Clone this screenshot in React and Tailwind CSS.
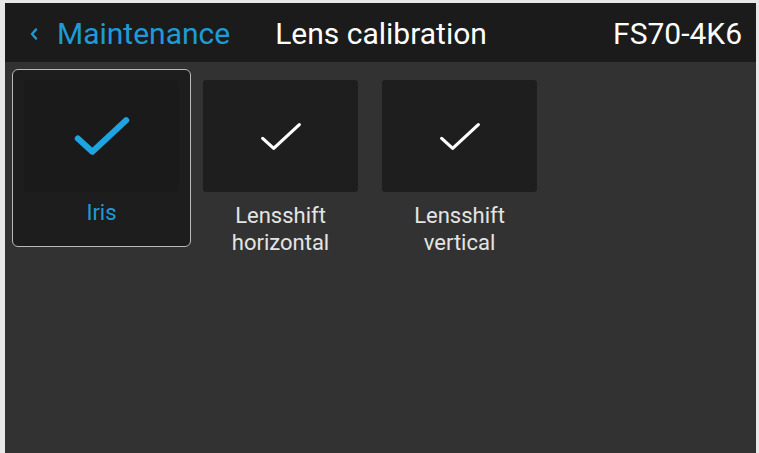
import React, { useState } from 'react';

const font = { fontFamily: 'Roboto, "Liberation Sans", sans-serif' };

const Check = ({ className }) => (
    <svg viewBox="0 0 48 36" className={className} fill="none" stroke="currentColor" strokeLinecap="round" strokeLinejoin="round">
        <path d="M4 20 L16 31 L44 5" />
    </svg>
);

const Back = () => (
    <svg viewBox="0 0 8 12" className="w-[8px] h-[12px] mr-[19px] text-[#1e9bd7]" fill="none" stroke="currentColor" strokeWidth="2.4" strokeLinecap="round" strokeLinejoin="round">
        <path d="M6 1.5 L2 6 L6 10.5" />
    </svg>
);

const items = [
    { id: 'iris', lines: ['Iris'] },
    { id: 'h', lines: ['Lensshift', 'horizontal'] },
    { id: 'v', lines: ['Lensshift', 'vertical'] },
];

const Tile = ({ item, selected, onClick }) => (
    <button
        onClick={onClick}
        className={`w-[179px] h-[178px] shrink-0 flex flex-col items-center pt-[10px] rounded-md ${selected ? 'border-[1.5px] border-[#b9b9b9] bg-[#1d1d1d]' : 'border-[1.5px] border-transparent'}`}
    >
        <div className={`w-[155px] h-[112px] shrink-0 rounded-[3px] flex items-center justify-center ${selected ? 'bg-[#1a1a1a]' : 'bg-[#1e1e1e]'}`}>
            {selected
                ? <Check className="w-[58px] h-[44px] text-[#1ea4e0] [stroke-width:5]" />
                : <Check className="w-[44px] h-[33px] text-white [stroke-width:3.5]" />}
        </div>
        <div className={`text-[22px] leading-[27px] text-center ${selected ? 'mt-[7px] text-[#1e9bd7]' : 'mt-[10px] text-[#e4e4e4]'}`}>
            {item.lines.map(l => <div key={l}>{l}</div>)}
        </div>
    </button>
);

export default function App() {
    const [sel, setSel] = useState('iris');

    return (
        <div style={font} className="w-[759px] h-[453px] bg-[#e8e8e8] pl-[5px] pt-[3px] pr-[3px] overflow-hidden">
            <div className="h-full flex flex-col bg-[#323232]">
                <div className="h-[59px] shrink-0 bg-[#1b1b1b] flex items-center pt-[2px] pl-[25px] pr-[14px]">
                    <Back />
                    <span className="text-[#1e9bd7] text-[30px]">Maintenance</span>
                    <span className="text-white text-[30px] ml-[45px]">Lens calibration</span>
                    <span className="text-white text-[30px] ml-auto">FS70-4K6</span>
                </div>
                <div className="flex pl-[7px] pt-[7px]">
                    {items.map(it => (
                        <Tile key={it.id} item={it} selected={sel === it.id} onClick={() => setSel(it.id)} />
                    ))}
                </div>
            </div>
        </div>
    );
}
